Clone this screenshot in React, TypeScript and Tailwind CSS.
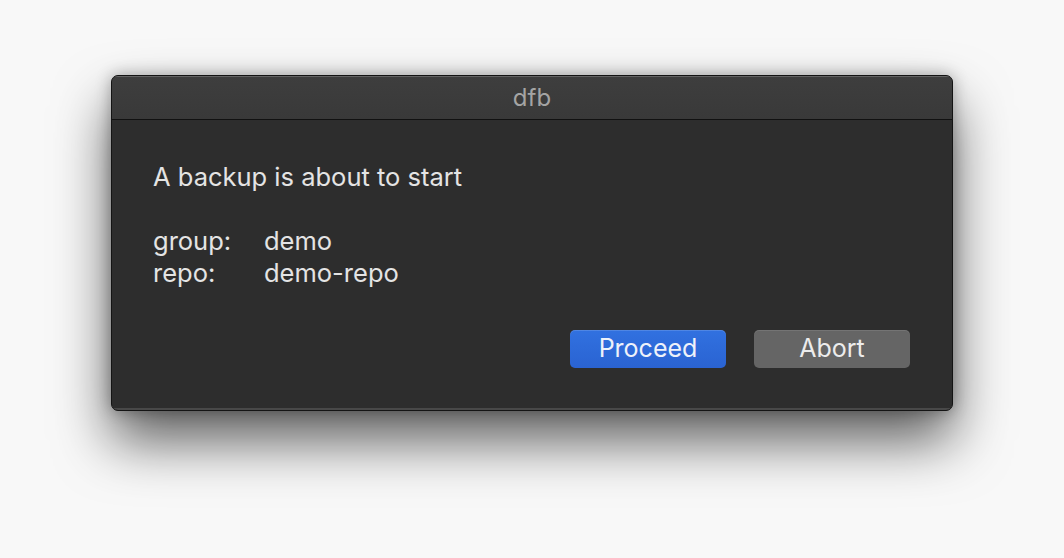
export default function App() {
  return (
    <div className="w-[1064px] h-[558px] bg-[#f8f8f8] pt-[75px] pl-[111px]" style={{ fontFamily: '"Inter", "Liberation Sans", sans-serif' }}>
      <div className="w-[842px] h-[336px] rounded-[7px] border border-[#141414] bg-[#2d2d2d] shadow-[0_30px_55px_rgba(0,0,0,0.62),0_0_16px_rgba(0,0,0,0.3)] overflow-hidden flex flex-col">
        <div className="h-[44px] shrink-0 bg-gradient-to-b from-[#3e3e3e] to-[#393939] border-b border-[#111] shadow-[inset_0_1px_0_rgba(255,255,255,0.2)] flex items-center justify-center">
          <span className="text-[24px] text-[#a4a4a4]">dfb</span>
        </div>
        <div className="flex-1 flex flex-col pl-[41px] pr-[42px] pt-[41px] text-[#e4e4e4] text-[25.5px] shadow-[inset_0_-2px_0_rgba(255,255,255,0.13)]">
          <p className="leading-[32px]">A backup is about to start</p>
          <div className="mt-[32px] grid grid-cols-[111px_1fr] leading-[32px]">
            <span>group:</span>
            <span>demo</span>
            <span>repo:</span>
            <span>demo-repo</span>
          </div>
          <div className="mt-[41px] flex justify-end gap-[28px]">
            <button className="w-[156px] h-[38px] rounded-[5px] bg-gradient-to-b from-[#3171e0] to-[#2a63d2] text-[25px] text-[#eef2fa] shadow-[inset_0_1px_0_rgba(255,255,255,0.15)]">
              Proceed
            </button>
            <button className="w-[156px] h-[38px] rounded-[5px] bg-[#656565] text-[25px] text-[#ececec] shadow-[inset_0_1px_0_rgba(255,255,255,0.1)]">
              Abort
            </button>
          </div>
        </div>
      </div>
    </div>
  )
}
